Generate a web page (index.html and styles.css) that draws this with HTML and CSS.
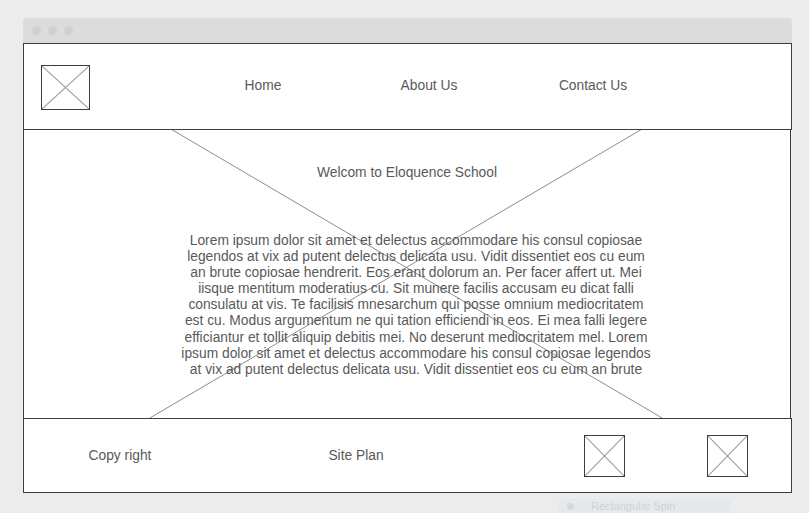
FILE: index.html
```html
<!DOCTYPE html>
<html lang="en">

<head>
    <meta charset="UTF-8">
    <meta name="viewport" content="width=device-width, initial-scale=1.0">
    <title>Eloquence School</title>
    <link rel="stylesheet" href="styles.css">
</head>

<body>
    <div class="window">
        <div class="titlebar">
            <span class="dot"></span>
            <span class="dot"></span>
            <span class="dot"></span>
        </div>

        <div class="header">
            <div class="placeholder logo">
                <svg viewBox="0 0 10 10" preserveAspectRatio="none">
                    <line x1="0" y1="0" x2="10" y2="10" />
                    <line x1="10" y1="0" x2="0" y2="10" />
                </svg>
            </div>
            <div class="nav">
                <a class="nav-item">Home</a>
                <a class="nav-item">About Us</a>
                <a class="nav-item">Contact Us</a>
            </div>
        </div>

        <div class="main">
            <!-- big image placeholder behind the text -->
            <svg class="hero-x" viewBox="0 0 767 288" preserveAspectRatio="none">
                <line x1="147" y1="-1" x2="639" y2="288" />
                <line x1="619" y1="-1" x2="126" y2="288" />
            </svg>
            <h2 class="title">Welcom to Eloquence School</h2>
            <p class="text">Lorem ipsum dolor sit amet et delectus accommodare his consul copiosae legendos at vix ad putent delectus delicata usu. Vidit dissentiet eos cu eum an brute copiosae hendrerit. Eos erant dolorum an. Per facer affert ut. Mei iisque mentitum moderatius cu. Sit munere facilis accusam eu dicat falli consulatu at vis. Te facilisis mnesarchum qui posse omnium mediocritatem est cu. Modus argumentum ne qui tation efficiendi in eos. Ei mea falli legere efficiantur et tollit aliquip debitis mei. No deserunt mediocritatem mel. Lorem ipsum dolor sit amet et delectus accommodare his consul copiosae legendos at vix ad putent delectus delicata usu. Vidit dissentiet eos cu eum an brute</p>
        </div>

        <div class="footer">
            <span class="foot-link copy">Copy right</span>
            <span class="foot-link plan">Site Plan</span>
            <div class="placeholder social first">
                <svg viewBox="0 0 10 10" preserveAspectRatio="none">
                    <line x1="0" y1="0" x2="10" y2="10" />
                    <line x1="10" y1="0" x2="0" y2="10" />
                </svg>
            </div>
            <div class="placeholder social">
                <svg viewBox="0 0 10 10" preserveAspectRatio="none">
                    <line x1="0" y1="0" x2="10" y2="10" />
                    <line x1="10" y1="0" x2="0" y2="10" />
                </svg>
            </div>
        </div>
    </div>

    <div class="tooltip"><span class="tip-dot"></span>Rectangular Spin</div>
</body>

</html>
```

FILE: styles.css
```css
body {
    font-family: "Liberation Sans", Arial, sans-serif;
    background-color: #ececec;
    margin: 0;
    padding: 18px 0 0 23px;
    height: 513px;
    box-sizing: border-box;
    overflow: hidden;
    position: relative;
    color: #595959;
}

.window {
    width: 769px;
}

.titlebar {
    height: 25px;
    background-color: #dcdcdc;
    border-radius: 4px 4px 0 0;
    display: flex;
    align-items: center;
    gap: 7px;
    padding-left: 9px;
    box-sizing: border-box;
}

.dot {
    width: 9px;
    height: 9px;
    border-radius: 50%;
    background-color: #cfcfcf;
}

.header {
    height: 87px;
    border: 1px solid #3d3d3d;
    box-sizing: border-box;
    background-color: white;
    display: flex;
    align-items: center;
    padding-left: 17px;
}

.placeholder {
    border: 1px solid #3d3d3d;
    box-sizing: border-box;
    background-color: white;
}

.placeholder svg {
    display: block;
    width: 100%;
    height: 100%;
}

.placeholder line {
    stroke: #9a9a9a;
    stroke-width: 1;
    vector-effect: non-scaling-stroke;
}

.logo {
    width: 49px;
    height: 45px;
    margin-top: 1px;
}

.nav {
    display: flex;
    margin-left: 123px;
    margin-top: -2px;
}

.nav-item {
    width: 100px;
    text-align: center;
    font-size: 13.8px;
    color: #595959;
}

.nav-item + .nav-item {
    margin-left: 66px;
}

.nav-item:last-child {
    margin-left: 64px;
}

.main {
    position: relative;
    width: 768px;
    height: 288px;
    border-left: 1px solid #3d3d3d;
    border-right: 1px solid #3d3d3d;
    box-sizing: border-box;
    background-color: white;
    padding-top: 34px;
}

.hero-x {
    position: absolute;
    left: 0;
    top: 0;
    width: 100%;
    height: 100%;
}

.hero-x line {
    stroke: #6f6f6f;
    stroke-width: 0.8;
}

.title {
    position: relative;
    margin: 0;
    font-size: 13.8px;
    font-weight: normal;
    line-height: 17px;
    text-align: center;
    color: #595959;
}

.text {
    position: relative;
    width: 472px;
    margin: 52px 0 0 156px;
    font-size: 13.8px;
    line-height: 16.1px;
    text-align: center;
    color: #595959;
}

.footer {
    height: 75px;
    border: 1px solid #3d3d3d;
    box-sizing: border-box;
    background-color: white;
    display: flex;
    align-items: center;
}

.foot-link {
    font-size: 13.8px;
    color: #595959;
    text-align: center;
    width: 100px;
}

.copy {
    margin-left: 46px;
}

.plan {
    margin-left: 136px;
}

.social {
    width: 41px;
    height: 42px;
}

.social.first {
    margin-left: 178px;
}

.social + .social {
    margin-left: 82px;
}

.tooltip {
    position: absolute;
    left: 559px;
    top: 499px;
    width: 172px;
    height: 14px;
    background-color: #e5e9ec;
    font-size: 11px;
    line-height: 14px;
    color: #cfd3d7;
    display: flex;
    align-items: center;
}

.tip-dot {
    width: 7px;
    height: 7px;
    border-radius: 50%;
    background-color: #d4d8db;
    margin: 0 17px 0 8px;
}
```
